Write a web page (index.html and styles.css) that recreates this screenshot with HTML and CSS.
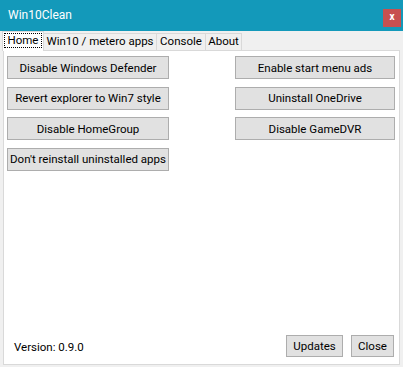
FILE: index.html
```html
<!DOCTYPE html>
<html>
<head>
<meta charset="utf-8">
<link rel="stylesheet" href="styles.css">
</head>
<body>
<div class="window">
  <div class="titlebar">
    <span class="title">Win10Clean</span>
    <span class="close">x</span>
  </div>
  <div class="tabs">
    <div class="tab active"><span class="focus">Home</span></div>
    <div class="tab t2">Win10 / metero apps</div>
    <div class="tab t3">Console</div>
    <div class="tab t4">About</div>
  </div>
  <div class="panel">
    <div class="grid">
      <button class="btn left">Disable Windows Defender</button>
      <button class="btn right">Enable start menu ads</button>
      <button class="btn left">Revert explorer to Win7 style</button>
      <button class="btn right">Uninstall OneDrive</button>
      <button class="btn left">Disable HomeGroup</button>
      <button class="btn right">Disable GameDVR</button>
      <button class="btn left">Don't reinstall uninstalled apps</button>
    </div>
    <div class="footer">
      <span class="version">Version: 0.9.0</span>
      <button class="btn small updates">Updates</button>
      <button class="btn small closebtn">Close</button>
    </div>
  </div>
</div>
</body>
</html>
```

FILE: styles.css
```css
html, body {
  margin: 0;
  padding: 0;
}
body {
  width: 403px;
  height: 367px;
  background: #f0f0f0;
  font-family: Roboto, "Liberation Sans", sans-serif;
  font-size: 11.5px;
  color: #000;
  overflow: hidden;
}
.window {
  width: 403px;
  height: 367px;
  display: flex;
  flex-direction: column;
}
.titlebar {
  height: 31px;
  background: #1399ba;
  display: flex;
  align-items: flex-start;
  color: #fff;
}
.title {
  font-size: 12px;
  margin-left: 8px;
  margin-top: 8px;
  line-height: 14px;
}
.close {
  margin-left: auto;
  margin-top: 9px;
  margin-right: 2px;
  width: 18px;
  height: 18px;
  background: #c75050;
  color: #fff;
  font-size: 10px;
  font-weight: bold;
  line-height: 16px;
  text-align: center;
}
.tabs {
  height: 19px;
  display: flex;
  align-items: flex-end;
  padding-left: 2px;
  position: relative;
  z-index: 1;
}
.tab {
  height: 16px;
  box-sizing: border-box;
  border: 1px solid #d9d9d9;
  border-bottom: none;
  border-left: none;
  background: #f0f0f0;
  line-height: 15px;
  text-align: center;
  height: 17px;
}
.tab.active {
  width: 42px;
  height: 20px;
  margin-bottom: -1px;
  background: #fff;
  border-left: 1px solid #d9d9d9;
  padding: 1px 1px 0 1px;
}
.focus {
  display: block;
  border: 1px dotted #000;
  height: 15px;
  box-sizing: border-box;
  line-height: 13px;
}
.t2 { width: 113px; }
.t3 { width: 49px; }
.t4 { width: 36px; }
.panel {
  margin-left: 3px;
  width: 397px;
  height: 315px;
  box-sizing: border-box;
  background: #fff;
  border: 1px solid #d9d9d9;
  display: flex;
  flex-direction: column;
  padding: 5px 4px 7px 3px;
}
.grid {
  display: grid;
  grid-template-columns: 162px 160px;
  justify-content: space-between;
  grid-auto-rows: 23px;
  row-gap: 7.67px;
}
.btn {
  font-family: inherit;
  font-size: 11.5px;
  color: #000;
  background: #e1e1e1;
  border: 1px solid #adadad;
  box-sizing: border-box;
  margin: 0;
  padding: 0;
  height: 23px;
  text-align: center;
}
.footer {
  margin-top: auto;
  display: flex;
  align-items: center;
  height: 22px;
}
.version {
  margin-left: 7px;
  margin-top: 1px;
}
.btn.small {
  height: 22px;
}
.updates {
  margin-left: auto;
  width: 57px;
}
.closebtn {
  margin-left: 8px;
  width: 43px;
  margin-right: 1px;
}
```
